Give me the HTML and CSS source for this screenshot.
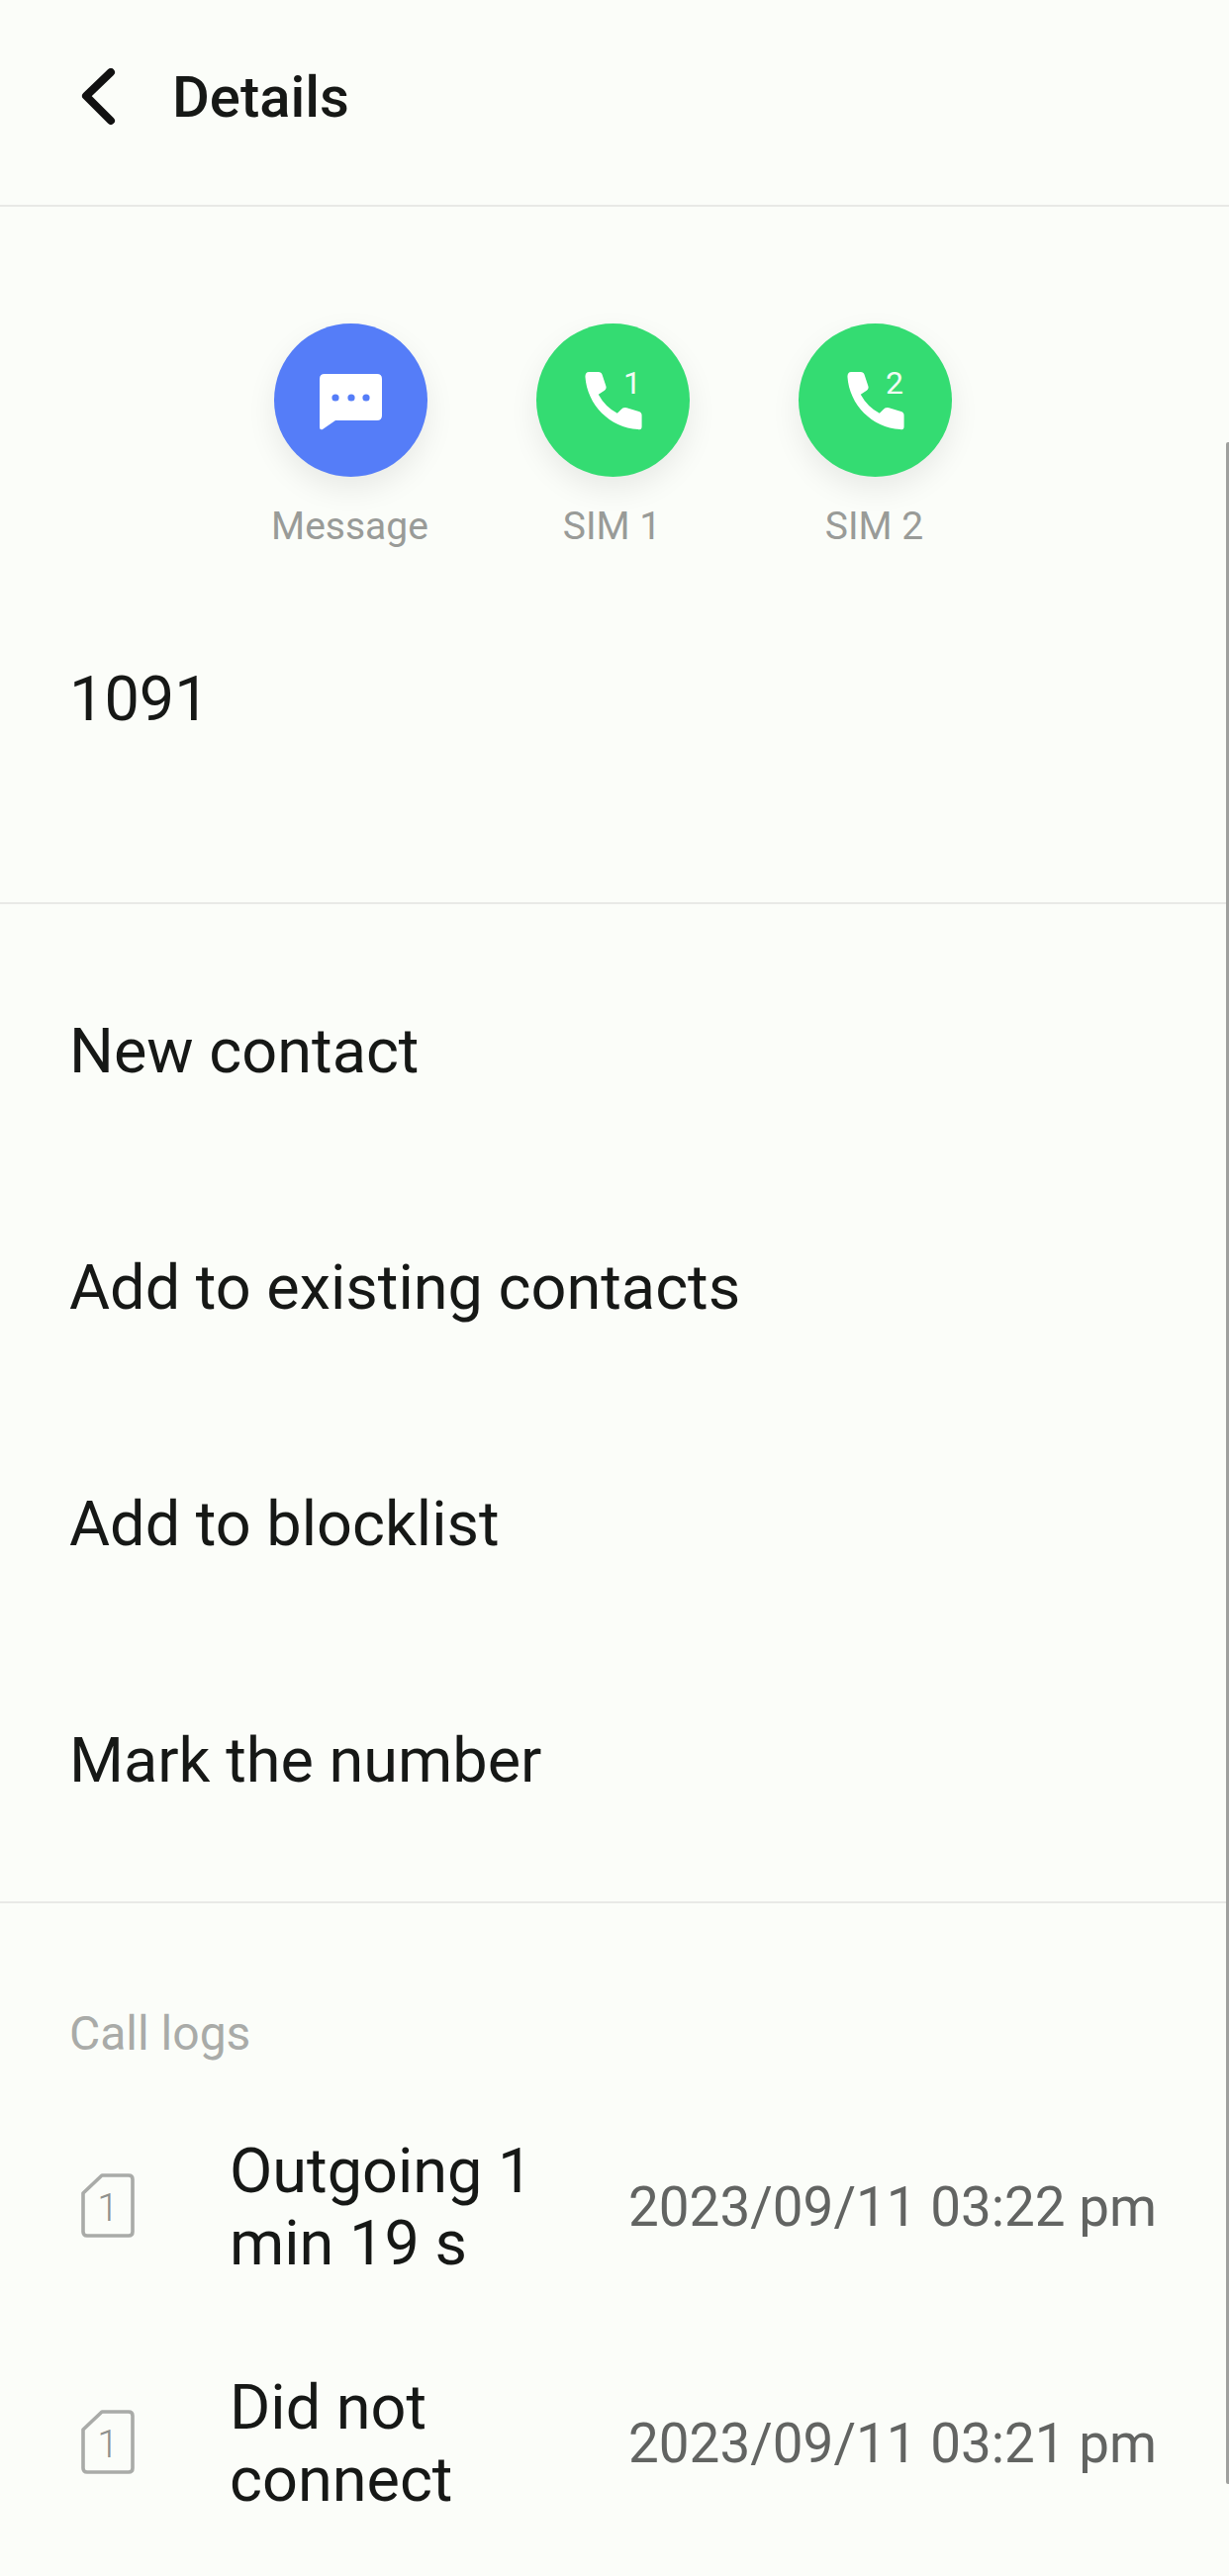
FILE: index.html
```html
<!DOCTYPE html>
<html lang="en">
<head>
  <meta charset="UTF-8">
  <meta name="viewport" content="width=device-width, initial-scale=1.0">
  <title>Details</title>
  <link rel="stylesheet" href="styles.css">
</head>
<body>
  <header class="topbar">
    <svg class="back" width="36" height="58" viewBox="0 0 36 58"><path d="M31 4 L6 28 L31 53" fill="none" stroke="#111" stroke-width="8" stroke-linecap="round" stroke-linejoin="round"/></svg>
    <h1>Details</h1>
  </header>

  <section class="summary">
    <div class="actions">
      <div class="action">
        <div class="circle blue">
          <svg class="msg-icon" width="64" height="58" viewBox="0 0 64 58"><path d="M5 0 H58 Q63 0 63 5 V42 Q63 47 58 47 H16 L3 56 Q0 57 0 54 V5 Q0 0 5 0 Z" fill="#fff"/><circle cx="16" cy="24" r="3.6" fill="#557df8"/><circle cx="32" cy="24" r="3.6" fill="#557df8"/><circle cx="47" cy="24" r="3.6" fill="#557df8"/></svg>
        </div>
        <span>Message</span>
      </div>
      <div class="action">
        <div class="circle green">
          <svg width="60" height="60" viewBox="0 0 60 63"><path d="M4 1 L14 1 Q17 1 18 4 L22 16 Q23 19 20 21 L14 25 Q21 38 34 45 L38 41 Q40 38 44 39 L57 43 Q60 44 60 47 V59 Q60 63 56 62 C26 60 2 36 0 6 Q0 1 4 1 Z" fill="#fff"/></svg>
          <span class="sim-num">1</span>
        </div>
        <span>SIM 1</span>
      </div>
      <div class="action">
        <div class="circle green">
          <svg width="60" height="60" viewBox="0 0 60 63"><path d="M4 1 L14 1 Q17 1 18 4 L22 16 Q23 19 20 21 L14 25 Q21 38 34 45 L38 41 Q40 38 44 39 L57 43 Q60 44 60 47 V59 Q60 63 56 62 C26 60 2 36 0 6 Q0 1 4 1 Z" fill="#fff"/></svg>
          <span class="sim-num">2</span>
        </div>
        <span>SIM 2</span>
      </div>
    </div>
    <div class="number">1091</div>
  </section>

  <ul class="menu">
    <li>New contact</li>
    <li>Add to existing contacts</li>
    <li>Add to blocklist</li>
    <li>Mark the number</li>
  </ul>

  <section class="logs">
    <h2>Call logs</h2>
    <div class="log">
      <div class="sim"><svg width="54" height="65" viewBox="0 0 54 65"><path d="M21 2 H48 Q52 2 52 6 V59 Q52 63 48 63 H6 Q2 63 2 59 V20 Z" fill="none" stroke="#a9aba8" stroke-width="3.6" stroke-linejoin="round"/></svg><span>1</span></div>
      <div class="log-text">Outgoing 1 min 19 s</div>
      <div class="log-time">2023/09/11 03:22 pm</div>
    </div>
    <div class="log">
      <div class="sim"><svg width="54" height="65" viewBox="0 0 54 65"><path d="M21 2 H48 Q52 2 52 6 V59 Q52 63 48 63 H6 Q2 63 2 59 V20 Z" fill="none" stroke="#a9aba8" stroke-width="3.6" stroke-linejoin="round"/></svg><span>1</span></div>
      <div class="log-text">Did not connect</div>
      <div class="log-time">2023/09/11 03:21 pm</div>
    </div>
  </section>

  <div class="scrollbar"></div>
</body>
</html>
```
FILE: styles.css
```css
* { box-sizing: border-box; }
html, body { height: 100%; }
body { margin: 0; height: 2604px; overflow: hidden; background: #fbfdf9; color: #161816; font-family: Roboto, "Noto Sans", sans-serif; position: relative; }

.topbar { height: 209px; display: flex; align-items: center; padding: 0 0 12px 81px; border-bottom: 2px solid #e8e9e6; }
.back { margin-right: 57px; }
.topbar h1 { margin: 0; font-size: 58px; font-weight: 500; }

.summary { height: 705px; border-bottom: 2px solid #e8e9e6; }
.actions { display: flex; gap: 110px; padding: 118px 0 0 277px; }
.action { width: 155px; display: flex; flex-direction: column; align-items: center; font-size: 39px; color: #999b98; white-space: nowrap; }
.action > span { margin-top: 27px; margin-right: 2px; line-height: 46px; }
.circle { width: 155px; height: 155px; border-radius: 50%; position: relative; display: flex; align-items: center; justify-content: center; box-shadow: 0 12px 30px rgba(0,0,0,.08); }
.blue { background: #557df8; }
.green { background: #34dc72; }
.msg-icon { margin-top: 4px; }
.sim-num { position: absolute; top: 42px; left: 88px; color: #f1fbf4; font-size: 32px; line-height: 36px; }
.number { margin: 117px 0 0 70px; font-size: 63px; line-height: 70px; }

.menu { list-style: none; margin: 0; padding: 29px 0 0; height: 1010px; border-bottom: 2px solid #e8e9e6; }
.menu li { height: 239px; padding-left: 70px; display: flex; align-items: center; font-size: 63px; }

.logs { padding: 0 0 0 70px; }
.logs h2 { margin: 0; padding-top: 105px; font-size: 48px; font-weight: 400; line-height: 54px; color: #a9aba8; }
.log { height: 239px; display: flex; align-items: center; }
.log:first-of-type { margin-top: 28px; }
.sim { width: 162px; margin-bottom: 3px; position: relative; display: flex; }
.sim svg { margin-left: 12px; }
.sim span { position: absolute; left: 12px; width: 54px; top: 12px; text-align: center; font-size: 39px; font-weight: 300; line-height: 46px; color: #8f918e; }
.log-text { width: 403px; font-size: 63px; line-height: 73px; }
.log-time { font-size: 54.8px; color: #626462; white-space: nowrap; }

.scrollbar { position: absolute; right: 0; top: 447px; height: 2064px; width: 3px; border-radius: 2px 0 0 2px; background: #9fa09e; }
```
